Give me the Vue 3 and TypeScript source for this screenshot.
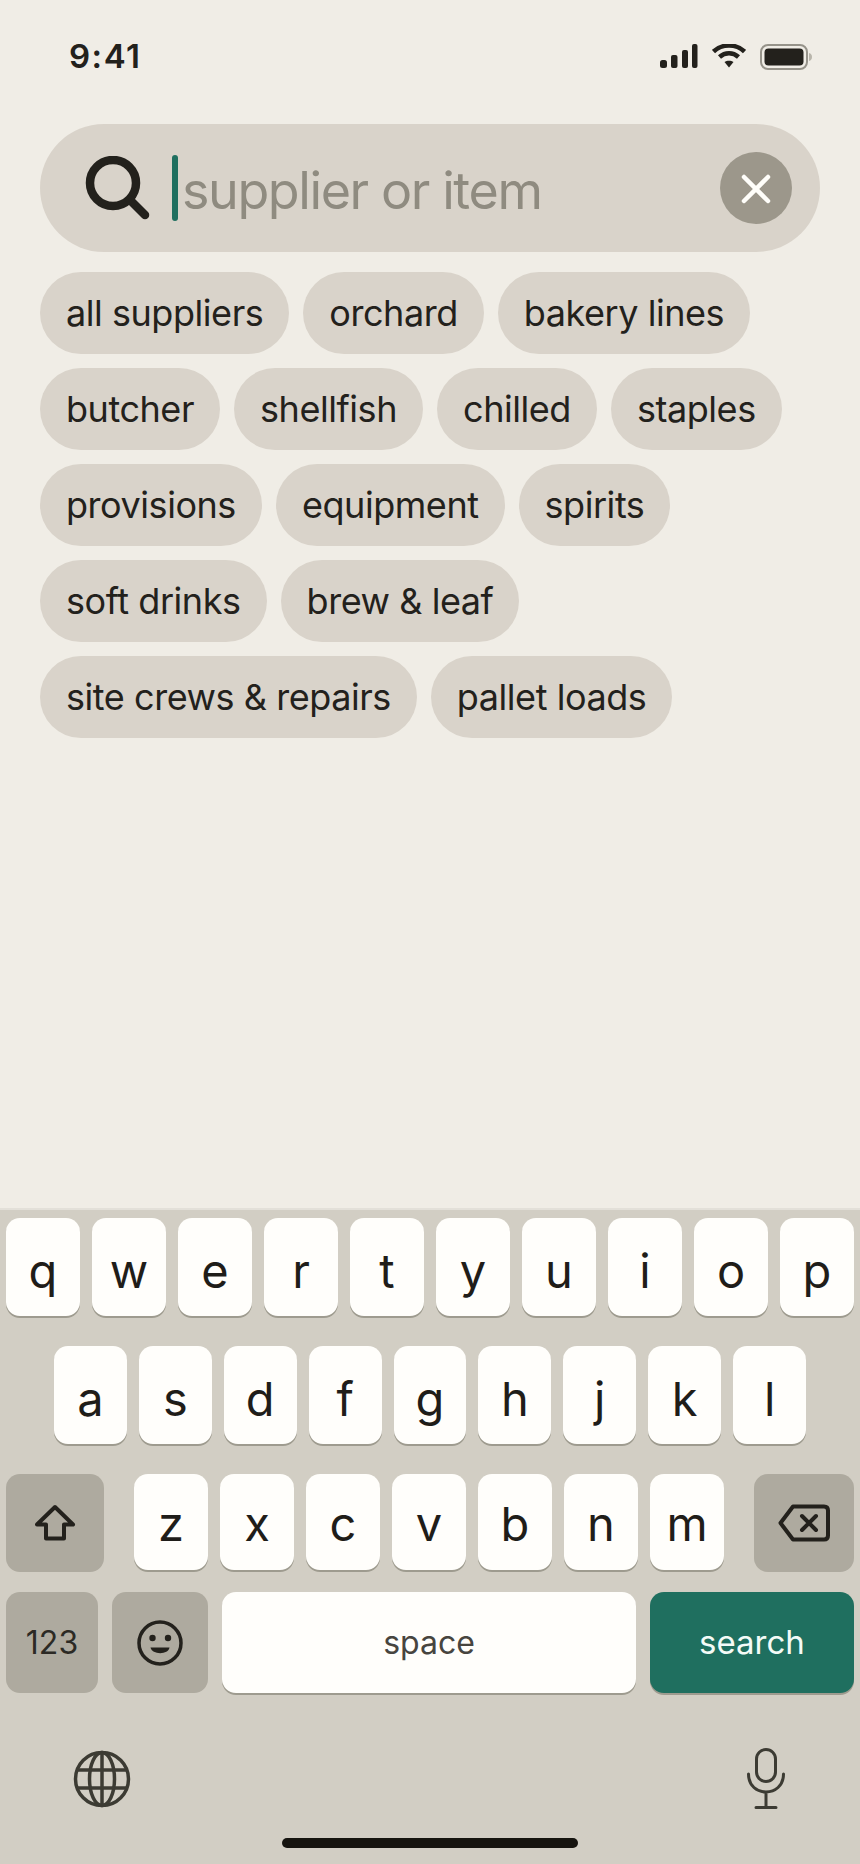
<template>
  <div class="screen">
    <!-- status bar -->
    <div class="status-bar">
      <span class="time">9:41</span>
      <div class="status-icons">
        <svg width="38" height="24" viewBox="0 0 38 24" class="signal">
          <rect x="0" y="16" width="7" height="8" rx="2.5" />
          <rect x="11" y="11" width="6.5" height="13" rx="2" />
          <rect x="22" y="6" width="6" height="18" rx="2" />
          <rect x="32" y="0" width="5.5" height="24" rx="2" />
        </svg>
        <svg width="34" height="24" viewBox="0 0 34 24" class="wifi">
          <path d="M1.5 7.5 C10 -0.5 24 -0.5 32.5 7.5" />
          <path d="M7.5 13 C13 8 21 8 26.5 13" />
          <path class="wifi-dot" d="M12.5 18 C15 16.4 19 16.4 21.5 18 L17 23.5 Z" />
        </svg>
        <svg width="52" height="26" viewBox="0 0 52 26" class="battery">
          <rect class="battery-shell" x="1" y="1" width="46" height="24" rx="7" />
          <rect class="battery-level" x="4.5" y="4.5" width="39" height="17" rx="4" />
          <path class="battery-nub" d="M49 9 C51 9.5 52 11 52 13 C52 15 51 16.5 49 17 Z" />
        </svg>
      </div>
    </div>

    <!-- search field -->
    <div class="search-bar">
      <svg class="search-icon" width="66" height="66" viewBox="0 0 66 66">
        <circle cx="28" cy="27" r="23" />
        <path d="M45 44 L60 59" />
      </svg>
      <span class="caret"></span>
      <span class="placeholder">supplier or item</span>
      <button class="clear-btn">
        <svg width="32" height="32" viewBox="0 0 32 32">
          <path d="M4 5 L28 29 M28 5 L4 29" />
        </svg>
      </button>
    </div>

    <!-- category chips -->
    <div class="chips">
      <span v-for="chip in chips" :key="chip" class="chip">{{ chip }}</span>
    </div>

    <!-- keyboard -->
    <div class="keyboard">
      <div class="key-row">
        <button v-for="k in row1" :key="k" class="key">{{ k }}</button>
      </div>
      <div class="key-row row-2">
        <button v-for="k in row2" :key="k" class="key">{{ k }}</button>
      </div>
      <div class="key-row row-3">
        <button class="key fn shift">
          <svg width="42" height="38" viewBox="0 0 42 38">
            <path d="M21 3 L39 20.5 H30 V34.5 H12 V20.5 H3 Z" />
          </svg>
        </button>
        <div class="letters">
          <button v-for="k in row3" :key="k" class="key">{{ k }}</button>
        </div>
        <button class="key fn backspace">
          <svg width="52" height="38" viewBox="0 0 52 38">
            <path d="M15 2.5 H46 Q50 2.5 50 6.5 V31.5 Q50 35.5 46 35.5 H15 L2.5 19 Z" />
            <path d="M24 12 L38 26 M38 12 L24 26" />
          </svg>
        </button>
      </div>
      <div class="key-row row-4">
        <button class="key fn num">123</button>
        <button class="key fn emoji">
          <svg width="46" height="46" viewBox="0 0 46 46">
            <circle class="face" cx="23" cy="23" r="21" />
            <circle cx="15.5" cy="18" r="3.2" />
            <circle cx="31" cy="18" r="3.2" />
            <path d="M13.5 27.5 H32.5 C31.5 35 15 35 13.5 27.5 Z" />
          </svg>
        </button>
        <button class="key space">space</button>
        <button class="key go">search</button>
      </div>
      <div class="kb-bottom">
        <svg class="globe" width="58" height="58" viewBox="0 0 58 58">
          <circle cx="29" cy="29" r="26.5" />
          <ellipse cx="29" cy="29" rx="12.5" ry="26.5" />
          <path d="M29 2.5 V55.5 M5 20 H53 M5 38 H53" />
        </svg>
        <svg class="mic" width="38" height="62" viewBox="0 0 38 62">
          <rect x="9.5" y="1.5" width="19" height="32" rx="9.5" />
          <path d="M1.5 26 C1.5 50 36.5 50 36.5 26 M19 44 V59 M9 59.5 H29" />
        </svg>
      </div>
      <div class="home-bar"></div>
    </div>
  </div>
</template>

<script setup lang="ts">
const chips: string[] = [
  'all suppliers',
  'orchard',
  'bakery lines',
  'butcher',
  'shellfish',
  'chilled',
  'staples',
  'provisions',
  'equipment',
  'spirits',
  'soft drinks',
  'brew & leaf',
  'site crews & repairs',
  'pallet loads',
];

const row1 = 'qwertyuiop'.split('');
const row2 = 'asdfghjkl'.split('');
const row3 = 'zxcvbnm'.split('');
</script>

<style>
html,
body {
  margin: 0;
  background: #f0ede6;
}
</style>

<style scoped>
.screen {
  width: 860px;
  height: 1864px;
  display: flex;
  flex-direction: column;
  background: #f0ede6;
  color: #23211c;
  font-family: Inter, "Liberation Sans", sans-serif;
  overflow: hidden;
}

/* status bar */
.status-bar {
  height: 124px;
  box-sizing: border-box;
  padding: 36px 48px 0 69px;
  display: flex;
  justify-content: space-between;
  align-items: flex-start;
}

.time {
  font-size: 33px;
  line-height: 40px;
  font-weight: 600;
  letter-spacing: 1.5px;
}

.status-icons {
  display: flex;
  align-items: flex-start;
  gap: 14px;
  padding-top: 8px;
}

.signal {
  fill: #23211c;
}

.wifi path {
  fill: none;
  stroke: #23211c;
  stroke-width: 4.5;
}

.wifi .wifi-dot {
  fill: #23211c;
  stroke: none;
}

.battery-shell {
  fill: none;
  stroke: #96938a;
  stroke-width: 2;
}

.battery-level {
  fill: #23211c;
}

.battery-nub {
  fill: #b9b6ac;
}

/* search field */
.search-bar {
  height: 128px;
  margin: 0 40px;
  padding: 0 28px 0 45px;
  display: flex;
  align-items: center;
  background: #d9d3ca;
  border-radius: 64px;
}

.search-icon {
  margin-top: 2px;
  flex: none;
}

.search-icon circle,
.search-icon path {
  fill: none;
  stroke: #23211c;
  stroke-width: 8.5;
  stroke-linecap: round;
}

.caret {
  width: 6px;
  height: 66px;
  margin-left: 21px;
  background: #1f6f5f;
  border-radius: 3px;
  flex: none;
}

.placeholder {
  margin-left: 4px;
  flex: 1;
  font-size: 52px;
  line-height: 66px;
  letter-spacing: -1.4px;
  color: #8f8b80;
  padding-top: 6px;
}

.clear-btn {
  width: 72px;
  height: 72px;
  padding: 0;
  border: 0;
  border-radius: 50%;
  background: #9c978b;
  display: flex;
  align-items: center;
  justify-content: center;
}

.clear-btn path {
  fill: none;
  stroke: #fffefa;
  stroke-width: 4.5;
  stroke-linecap: round;
}

/* chips */
.chips {
  margin: 20px 40px 0;
  display: flex;
  flex-wrap: wrap;
  gap: 14px;
}

.chip {
  height: 82px;
  padding: 0 26px;
  display: flex;
  align-items: center;
  background: #d9d3ca;
  border-radius: 41px;
  font-size: 36px;
  letter-spacing: -0.45px;
}

/* keyboard */
.keyboard {
  margin-top: auto;
  height: 656px;
  box-sizing: border-box;
  position: relative;
  padding: 8px 6px 0;
  background: #d2cec4;
  border-top: 2px solid #e3e0d9;
}

.key-row {
  display: flex;
  gap: 12px;
  height: 98px;
  margin-bottom: 30px;
}

.row-2 {
  padding: 0 48px;
}

.key {
  flex: 1 1 0;
  min-width: 0;
  padding: 0;
  border: 0;
  border-radius: 14px;
  background: #fffefb;
  box-shadow: 0 2px 0 #9e9b8f;
  color: #1f1d19;
  font-family: inherit;
  font-size: 47px;
  line-height: 1;
  display: flex;
  align-items: center;
  justify-content: center;
  padding-top: 6px;
  box-sizing: border-box;
}

.letters {
  flex: 1;
  display: flex;
  align-items: flex-start;
  gap: 12px;
  padding: 0 18px;
}

.letters .key {
  height: 96px;
  padding-top: 3px;
}

.row-3 {
  margin-bottom: 20px;
}

.fn {
  background: #aeaa9f;
  box-shadow: none;
  padding-top: 0;
}

.shift,
.backspace {
  flex: none;
  height: 98px;
}

.shift {
  width: 98px;
}

.backspace {
  width: 100px;
}

.shift svg path,
.backspace svg path {
  fill: none;
  stroke: #23211c;
  stroke-width: 4;
  stroke-linejoin: round;
  stroke-linecap: round;
}

.row-4 {
  height: 101px;
  margin-bottom: 0;
  gap: 14px;
}

.num {
  flex: none;
  width: 92px;
  font-size: 32px;
  color: #2c2a25;
}

.emoji {
  flex: none;
  width: 96px;
}

.emoji svg {
  fill: #23211c;
}

.emoji .face {
  fill: none;
  stroke: #23211c;
  stroke-width: 3.5;
}

.space {
  flex: 1;
  font-size: 32px;
  color: #47453f;
  padding-top: 0;
}

.go {
  flex: none;
  width: 204px;
  background: #1f6f5f;
  color: #f4fbf7;
  font-size: 33px;
  padding-top: 0;
}

.kb-bottom {
  display: flex;
  justify-content: space-between;
  align-items: flex-start;
  padding: 55px 69px 0 67px;
}

.globe {
  margin-top: 2px;
}

.globe circle,
.globe ellipse,
.globe path {
  fill: none;
  stroke: #3c3b33;
  stroke-width: 3.5;
}

.mic rect,
.mic path {
  fill: none;
  stroke: #3c3b33;
  stroke-width: 3;
  stroke-linecap: round;
}

.home-bar {
  position: absolute;
  left: 282px;
  bottom: 16px;
  width: 296px;
  height: 10px;
  background: #16140f;
  border-radius: 5px;
}
</style>
